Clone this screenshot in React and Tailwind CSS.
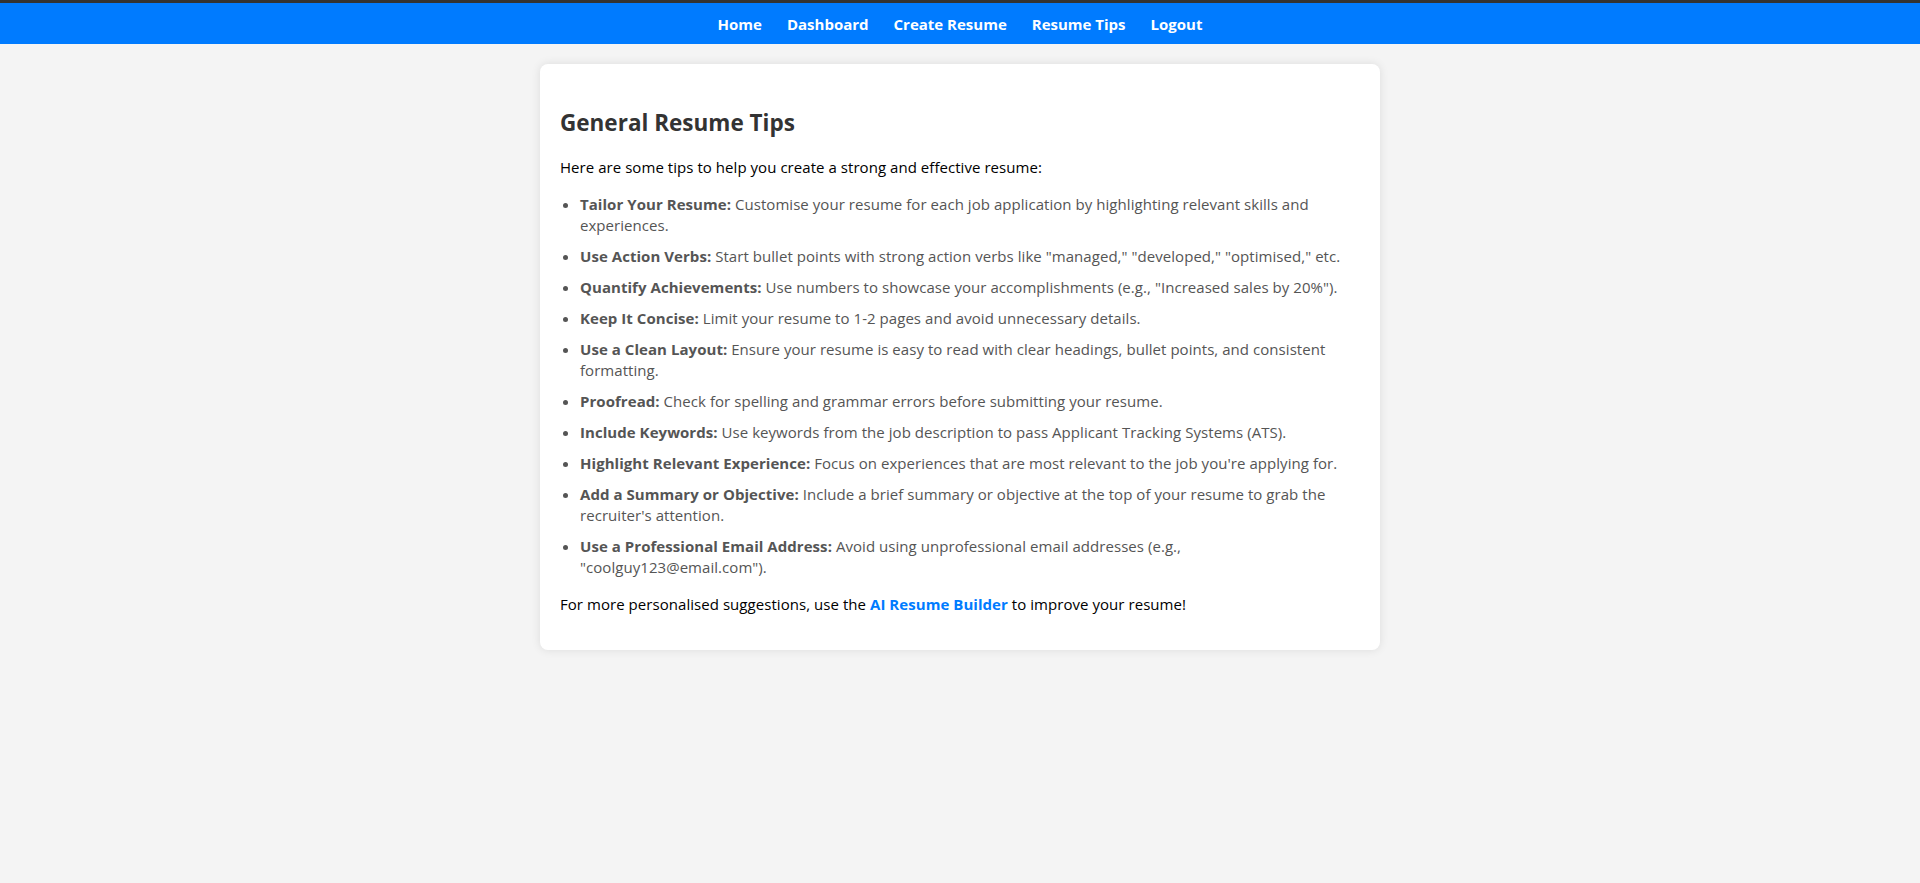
import React from "react";

const tips = [
  ["Tailor Your Resume:", "Customise your resume for each job application by highlighting relevant skills and experiences."],
  ["Use Action Verbs:", 'Start bullet points with strong action verbs like "managed," "developed," "optimised," etc.'],
  ["Quantify Achievements:", 'Use numbers to showcase your accomplishments (e.g., "Increased sales by 20%").'],
  ["Keep It Concise:", "Limit your resume to 1-2 pages and avoid unnecessary details."],
  ["Use a Clean Layout:", "Ensure your resume is easy to read with clear headings, bullet points, and consistent formatting."],
  ["Proofread:", "Check for spelling and grammar errors before submitting your resume."],
  ["Include Keywords:", "Use keywords from the job description to pass Applicant Tracking Systems (ATS)."],
  ["Highlight Relevant Experience:", "Focus on experiences that are most relevant to the job you're applying for."],
  ["Add a Summary or Objective:", "Include a brief summary or objective at the top of your resume to grab the recruiter's attention."],
  ["Use a Professional Email Address:", 'Avoid using unprofessional email addresses (e.g., "coolguy123@email.com").'],
];

const links = ["Home", "Dashboard", "Create Resume", "Resume Tips", "Logout"];

export default function App() {
  return (
    <div
      className="min-h-[883px] bg-[#f4f4f4]"
      style={{ fontFamily: '"Open Sans", "Noto Sans", sans-serif' }}
    >
      <div className="h-[3px] bg-[#333333]" />
      <nav className="flex h-[41px] items-center justify-center bg-[#007bff]">
        <ul className="flex items-center gap-[25px]">
          {links.map((l) => (
            <li key={l}>
              <a href="#" className="text-[15px] font-bold text-white">
                {l}
              </a>
            </li>
          ))}
        </ul>
      </nav>
      <main className="mx-auto mt-[20px] w-[840px] rounded-[8px] bg-white p-[20px] shadow-[0_0_10px_rgba(0,0,0,0.1)]">
        <h2 className="mt-[23px] mb-[18px] text-[22.5px] font-bold leading-[32px] text-[#333333]">
          General Resume Tips
        </h2>
        <p className="my-[16px] text-[15px] leading-[21px] tracking-[0.05px] text-black">
          Here are some tips to help you create a strong and effective resume:
        </p>
        <ul className="my-[16px] list-disc pl-[20px] text-[15px] leading-[21px] tracking-[0.05px] text-[#555555]">
          {tips.map(([b, t]) => (
            <li key={b} className="mb-[10px]">
              <strong className="font-bold">{b}</strong> {t}
            </li>
          ))}
        </ul>
        <p className="mt-[16px] mb-[15px] text-[15px] leading-[21px] tracking-[0.05px] text-black">
          For more personalised suggestions, use the{" "}
          <a href="#" className="font-bold text-[#007bff]">
            AI Resume Builder
          </a>{" "}
          to improve your resume!
        </p>
      </main>
    </div>
  );
}
